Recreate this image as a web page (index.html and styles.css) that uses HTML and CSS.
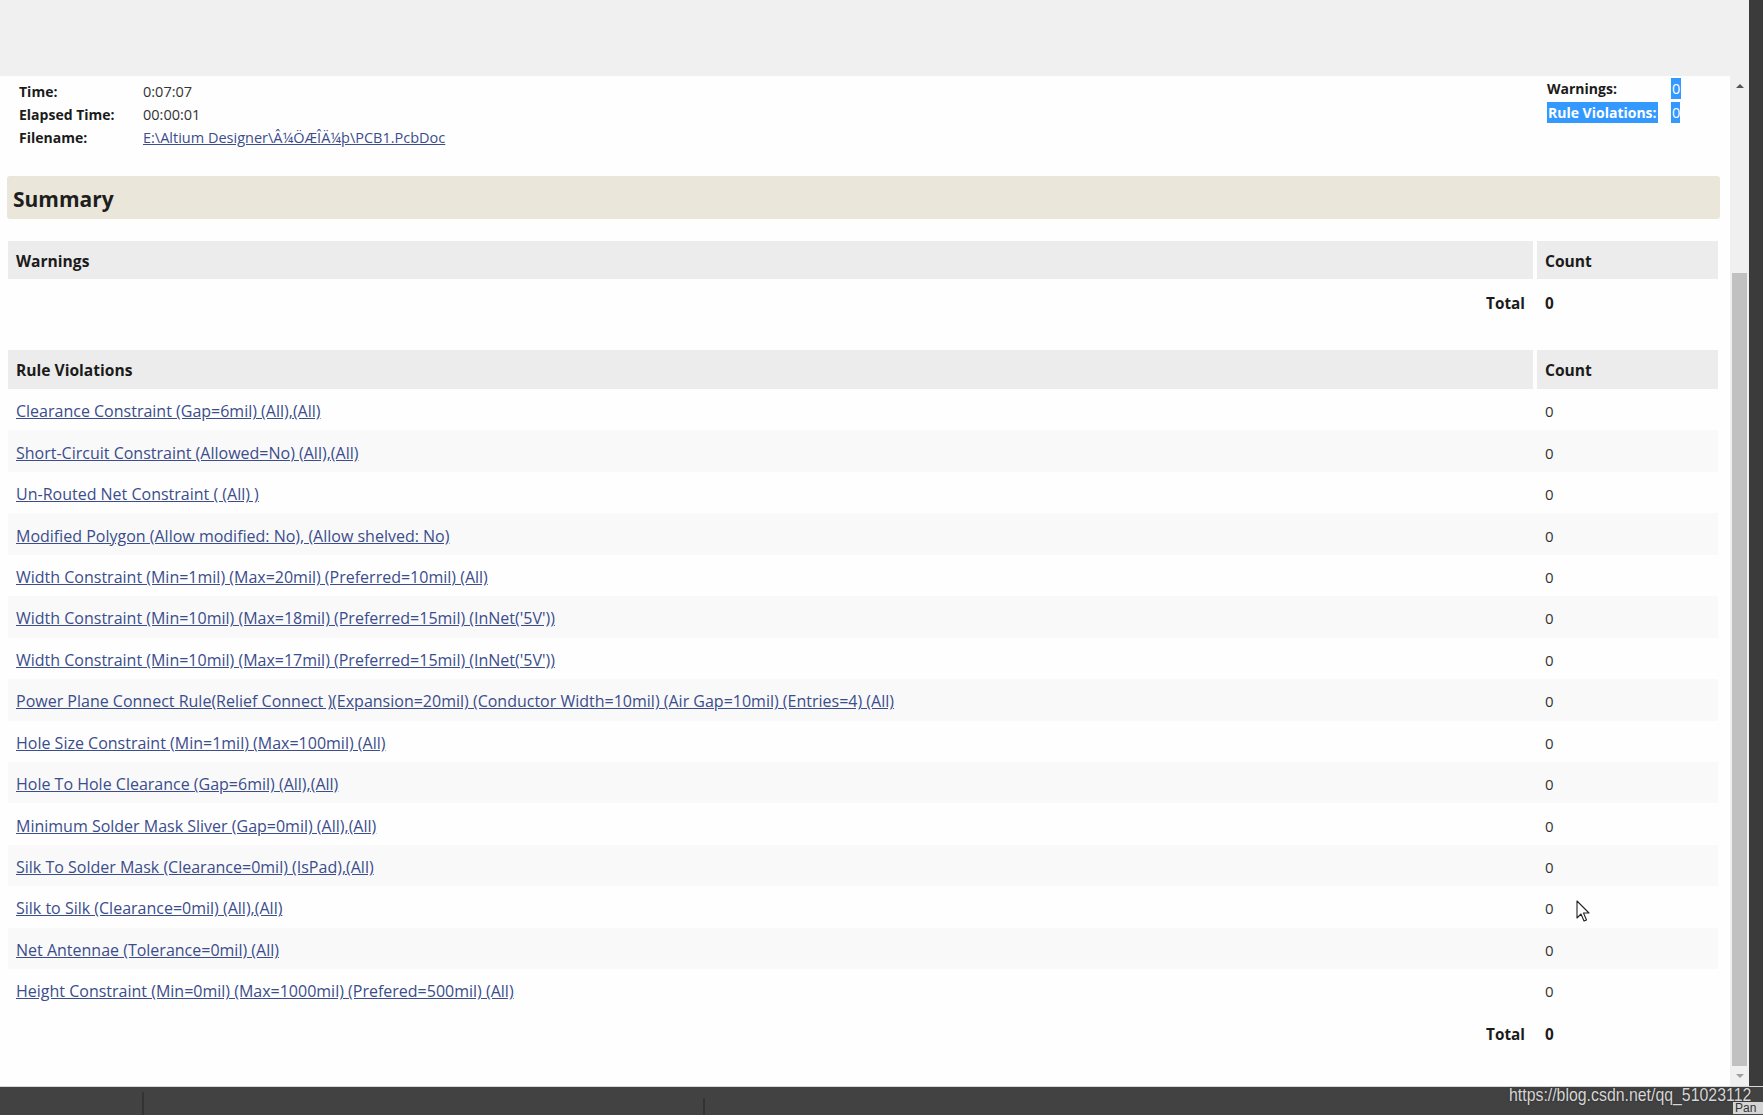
FILE: index.html
```html
<!DOCTYPE html>
<html>
<head>
<meta charset="utf-8">
<title>Design Rule Verification Report</title>
<link rel="stylesheet" href="styles.css">
</head>
<body>
<div class="screen">
  <div class="left">
    <div class="topbar"></div>
    <div class="mid">
      <div class="page">
        <div class="info">
          <div class="info-left">
            <div class="lbl">Time:</div><div class="val">0:07:07</div>
            <div class="lbl">Elapsed Time:</div><div class="val">00:00:01</div>
            <div class="lbl">Filename:</div><div class="val"><a href="#">E:\Altium Designer\Â¼ÖÆÎÄ¼þ\PCB1.PcbDoc</a></div>
          </div>
          <div class="info-right">
            <div class="lbl">Warnings:</div><div class="val"><span class="sel">0</span></div>
            <div class="lbl"><span class="sel">Rule Violations:</span></div><div class="val"><span class="sel sel-part">0</span></div>
          </div>
        </div>

        <div class="summary">Summary</div>

        <div class="tbl warn">
          <div class="row head"><div class="c1">Warnings</div><div class="c2">Count</div></div>
          <div class="row total"><div class="c1">Total</div><div class="c2">0</div></div>
        </div>

        <div class="tbl rules">
          <div class="row head"><div class="c1">Rule Violations</div><div class="c2">Count</div></div>
          <div class="row item"><div class="c1"><a href="#">Clearance Constraint (Gap=6mil) (All),(All)</a></div><div class="c2">0</div></div>
          <div class="row item"><div class="c1"><a href="#">Short-Circuit Constraint (Allowed=No) (All),(All)</a></div><div class="c2">0</div></div>
          <div class="row item"><div class="c1"><a href="#">Un-Routed Net Constraint ( (All) )</a></div><div class="c2">0</div></div>
          <div class="row item"><div class="c1"><a href="#">Modified Polygon (Allow modified: No), (Allow shelved: No)</a></div><div class="c2">0</div></div>
          <div class="row item"><div class="c1"><a href="#">Width Constraint (Min=1mil) (Max=20mil) (Preferred=10mil) (All)</a></div><div class="c2">0</div></div>
          <div class="row item"><div class="c1"><a href="#">Width Constraint (Min=10mil) (Max=18mil) (Preferred=15mil) (InNet('5V'))</a></div><div class="c2">0</div></div>
          <div class="row item"><div class="c1"><a href="#">Width Constraint (Min=10mil) (Max=17mil) (Preferred=15mil) (InNet('5V'))</a></div><div class="c2">0</div></div>
          <div class="row item"><div class="c1"><a href="#">Power Plane Connect Rule(Relief Connect )(Expansion=20mil) (Conductor Width=10mil) (Air Gap=10mil) (Entries=4) (All)</a></div><div class="c2">0</div></div>
          <div class="row item"><div class="c1"><a href="#">Hole Size Constraint (Min=1mil) (Max=100mil) (All)</a></div><div class="c2">0</div></div>
          <div class="row item"><div class="c1"><a href="#">Hole To Hole Clearance (Gap=6mil) (All),(All)</a></div><div class="c2">0</div></div>
          <div class="row item"><div class="c1"><a href="#">Minimum Solder Mask Sliver (Gap=0mil) (All),(All)</a></div><div class="c2">0</div></div>
          <div class="row item"><div class="c1"><a href="#">Silk To Solder Mask (Clearance=0mil) (IsPad),(All)</a></div><div class="c2">0</div></div>
          <div class="row item"><div class="c1"><a href="#">Silk to Silk (Clearance=0mil) (All),(All)</a></div><div class="c2">0</div></div>
          <div class="row item"><div class="c1"><a href="#">Net Antennae (Tolerance=0mil) (All)</a></div><div class="c2">0</div></div>
          <div class="row item"><div class="c1"><a href="#">Height Constraint (Min=0mil) (Max=1000mil) (Prefered=500mil) (All)</a></div><div class="c2">0</div></div>
          <div class="row total"><div class="c1">Total</div><div class="c2">0</div></div>
        </div>

        <svg class="cursor" width="14" height="23" viewBox="0 0 14 23"><path d="M1 1 L1 18 L5 14 L8 21 L10.5 20 L7.5 13 L13 13 Z" fill="#fff" stroke="#222" stroke-width="1.1" stroke-linejoin="round"/></svg>
      </div>
      <div class="vscroll">
        <div class="arrow up"></div>
        <div class="track"><div class="thumb"></div></div>
        <div class="arrow down"></div>
      </div>
    </div>
  </div>
  <div class="strip"></div>
  <div class="statusbar">
    <div class="seg s1"></div>
    <div class="seg s2"></div>
    <div class="seg s3"></div>
    <div class="watermark">https://blog.csdn.net/qq_51023112</div>
    <div class="pan">Pan</div>
  </div>
</div>
</body>
</html>
```

FILE: styles.css
```css
* { box-sizing: border-box; }
html, body { margin: 0; padding: 0; }
body {
  width: 1763px;
  height: 1115px;
  overflow: hidden;
  background: #f0f0f0;
  font-family: "Open Sans", "Noto Sans", sans-serif;
  font-size: 14px;
  color: #333;
}
.screen {
  display: grid;
  grid-template-columns: 1749px 14px;
  grid-template-rows: 1086px 29px;
  width: 1763px;
  height: 1115px;
  position: relative;
}
.left { display: flex; flex-direction: column; }
.topbar { height: 76px; background: #f0f0f0; flex: none; }
.mid { flex: 1; display: flex; min-height: 0; }
.page {
  width: 1730px;
  background: #fefefe;
  position: relative;
  overflow: hidden;
}
.strip { background: #3b3b3b; }

/* info header */
.info {
  display: flex;
  justify-content: space-between;
  padding: 0 40px 0 19px;
}
.info-left {
  display: grid;
  grid-template-columns: 124px auto;
  grid-auto-rows: 23px;
  align-items: center;
  padding-top: 4px;
}
.info-right {
  display: grid;
  grid-template-columns: 124px 19px;
  grid-auto-rows: 24px;
  align-items: center;
  width: 143px;
}
.lbl { font-weight: 700; color: #1b1b1b; white-space: nowrap; }
.val { color: #333; white-space: nowrap; font-size: 14.5px; }
a { color: #3b4d8c; text-decoration: underline; }
.sel { background: #3399ff; color: #fff; padding: 1px 1px; }
.sel-part { padding-right: 0; }

/* summary */
.summary {
  margin: 27px 0 0 7px;
  width: 1713px;
  height: 43px;
  background: #ebe6da;
  border-radius: 3px;
  padding: 2px 0 0 6px;
  font-size: 21px;
  font-weight: 700;
  color: #1e1e1e;
  display: flex;
  align-items: center;
}

/* tables */
.tbl { margin-left: 8px; width: 1710px; }
.warn { margin-top: 22px; }
.rules { margin-top: 24px; }
.row {
  display: grid;
  grid-template-columns: 1525px 181px;
  column-gap: 4px;
  align-items: center;
}
.row > div { padding: 0 8px; white-space: nowrap; }
.head { height: 39px; }
.head > div {
  background: #ececec;
  height: 100%;
  display: flex;
  align-items: center;
  font-weight: 700;
  font-size: 15.6px;
  color: #1b1b1b;
  padding-top: 1px;
}
.warn .head { height: 38px; }
.item { height: 41.45px; font-size: 16px; padding-top: 3px; }
.item:nth-child(odd) { background: #f9f9f9; }
.item .c2 { color: #333; font-size: 15px; }
.total { height: 47px; font-weight: 700; color: #1b1b1b; font-size: 15.3px; }
.rules .total { height: 43px; padding-top: 3px; }
.total .c1 { text-align: right; }

/* scrollbar */
.vscroll {
  width: 19px;
  background: #f0f0f0;
  display: flex;
  flex-direction: column;
  align-items: center;
}
.arrow { width: 0; height: 0; border-left: 4px solid transparent; border-right: 4px solid transparent; flex: none; }
.arrow.up { border-bottom: 4px solid #555; margin-top: 8px; }
.arrow.down { border-top: 4px solid #a0a0a0; margin-bottom: 8px; }
.track { flex: 1; width: 100%; padding: 0 2px; display: flex; flex-direction: column; }
.thumb { margin-top: 185px; margin-bottom: 8px; flex: 1; background: #c1c1c1; }

.cursor { position: absolute; left: 1576px; top: 824px; }

/* status bar */
.statusbar {
  grid-column: 1 / 3;
  background: #424242;
  border-top: 1px solid #d8d8d8;
  display: flex;
  position: relative;
}
.seg { height: 100%; }
.s1 { width: 144px; border-right: 2px solid #333; margin-top: 5px; }
.s2 { width: 561px; border-right: 2px solid #333; margin-top: 11px; }
.s3 { flex: 1; }
.watermark {
  position: absolute;
  left: 1509px;
  top: 0;
  font-family: "Liberation Sans", Arial, sans-serif;
  font-size: 19px;
  line-height: 16px;
  color: #d6d6d6;
  text-shadow: 0 0 2px #222;
  white-space: nowrap;
  transform: scaleX(0.835);
  transform-origin: left center;
}
.pan {
  position: absolute;
  left: 1733px;
  top: 15px;
  width: 30px;
  height: 12px;
  background: #d4d4d4;
  color: #333;
  font-family: "Liberation Sans", Arial, sans-serif;
  font-size: 12px;
  line-height: 12px;
  padding-left: 2px;
}
```
